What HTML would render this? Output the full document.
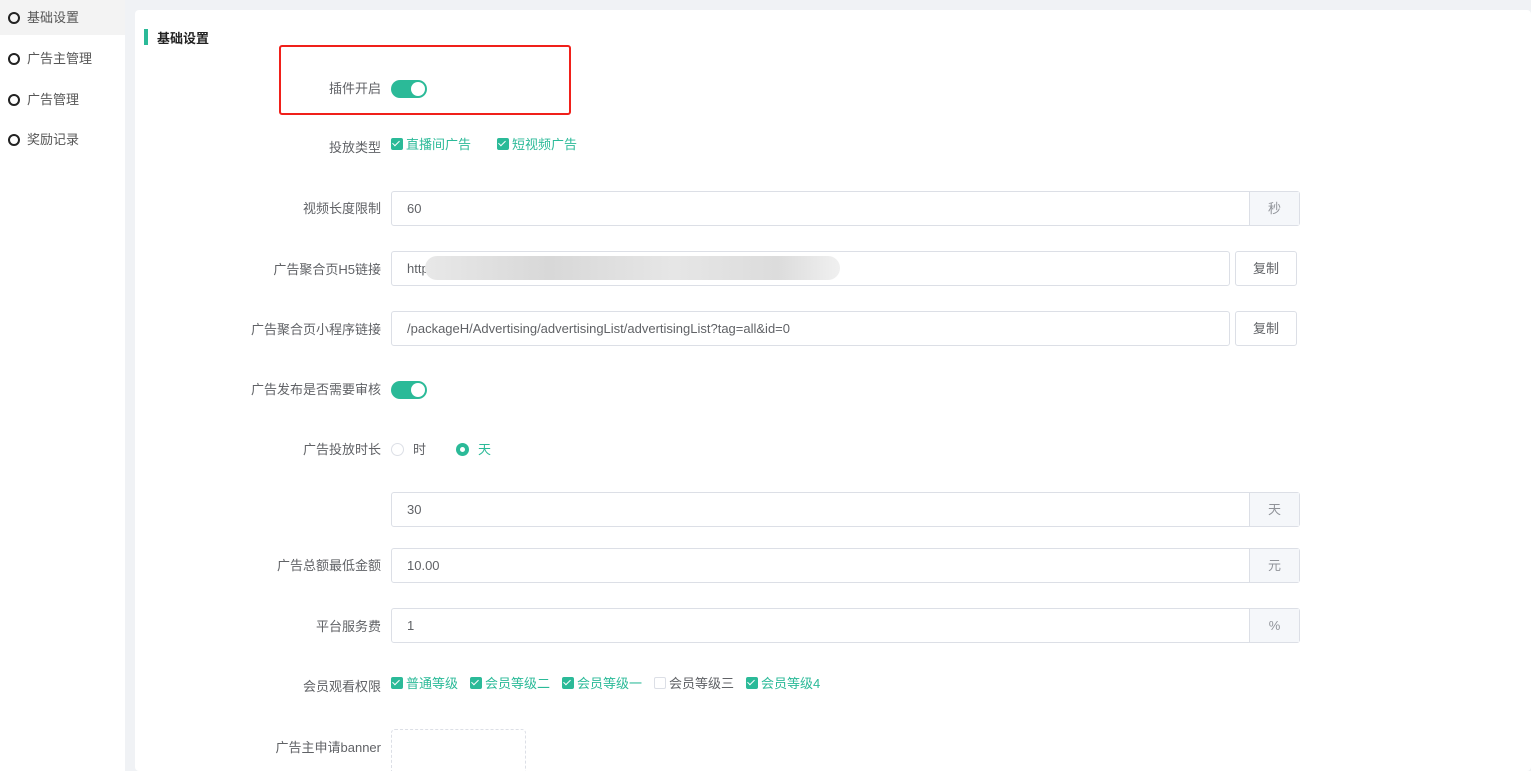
<!DOCTYPE html><html><head><meta charset="utf-8"><style>
*{box-sizing:border-box;margin:0;padding:0}
html,body{width:1531px;height:771px;overflow:hidden}
body{background:#f0f2f5;font-family:"Liberation Sans","Noto Sans CJK SC",sans-serif;font-size:13px;color:#606266;position:relative}
.a{position:absolute}
.side{left:0;top:0;width:125px;height:771px;background:#fff}
.si{left:0;width:125px;height:35px;line-height:35px;padding-left:27px;color:#555;font-size:13px}
.si:before{content:"";position:absolute;left:8px;top:12px;width:8px;height:8px;border:2px solid #222;border-radius:50%}
.card{left:135px;top:10px;width:1396px;height:761px;background:#fff;border-radius:4px}
.lbl{width:190px;left:191px;text-align:right;font-size:13px;color:#606266}
.inp{left:391px;width:909px;height:35px;border:1px solid #dcdfe6;border-radius:3px;line-height:33px;padding-left:15px;color:#606266}
.ap{position:absolute;right:0;top:0;width:50px;height:33px;background:#f5f7fa;border-left:1px solid #dcdfe6;text-align:center;color:#909399}
.btn{left:1235px;width:62px;height:35px;border:1px solid #dcdfe6;border-radius:3px;text-align:center;line-height:33px;color:#606266}
.sw{width:36px;height:18px;border-radius:9px;background:#2bba98}
.sw:after{content:"";position:absolute;right:2px;top:2px;width:14px;height:14px;border-radius:50%;background:#fff}
.cb{display:inline-block;width:12px;height:12px;border-radius:2px;background:#2bba98;vertical-align:-1px;margin-right:3px;position:relative}
.cb:after{content:"";position:absolute;left:3px;top:1px;width:3px;height:6px;border:solid #fff;border-width:0 1.5px 1.5px 0;transform:rotate(45deg)}
.cb.off{background:#fff;border:1px solid #dcdfe6}.cb.off:after{display:none}
.g{color:#2bba98}
</style></head><body>
<div class="a side"></div>
<div class="a si" style="top:0;background:#f3f3f3">基础设置</div>
<div class="a si" style="top:41px">广告主管理</div>
<div class="a si" style="top:82px">广告管理</div>
<div class="a si" style="top:122px">奖励记录</div>
<div class="a card"></div>
<div class="a" style="left:144px;top:29px;width:4px;height:16px;background:#2bba98"></div>
<div class="a" style="left:157px;top:28px;font-weight:bold;color:#222;font-size:13px">基础设置</div>
<div class="a" style="left:279px;top:45px;width:292px;height:70px;border:2px solid #f0201a;border-radius:3px"></div>
<div class="a lbl" style="top:78px">插件开启</div><div class="a sw" style="left:391px;top:80px"></div>
<div class="a lbl" style="top:137px">投放类型</div>
<div class="a g" style="left:391px;top:134px"><span class="cb"></span>直播间广告</div>
<div class="a g" style="left:497px;top:134px"><span class="cb"></span>短视频广告</div>
<div class="a lbl" style="top:198px">视频长度限制</div>
<div class="a inp" style="top:191px">60<div class="ap">秒</div></div>
<div class="a lbl" style="top:259px">广告聚合页H5链接</div>
<div class="a inp" style="top:251px;width:839px">http</div>
<div class="a" style="left:425px;top:256px;width:415px;height:24px;border-radius:12px;background:linear-gradient(90deg,#e8e8e8,#d8d8d8 30%,#e6e6e6 60%,#dcdcdc 85%,#f0f0f0)"></div>
<div class="a btn" style="top:251px">复制</div>
<div class="a lbl" style="top:319px">广告聚合页小程序链接</div>
<div class="a inp" style="top:311px;width:839px">/packageH/Advertising/advertisingList/advertisingList?tag=all&amp;id=0</div>
<div class="a btn" style="top:311px">复制</div>
<div class="a lbl" style="top:379px">广告发布是否需要审核</div><div class="a sw" style="left:391px;top:381px"></div>
<div class="a lbl" style="top:439px">广告投放时长</div>
<div class="a" style="left:391px;top:443px;width:13px;height:13px;border:1px solid #dcdfe6;border-radius:50%"></div>
<div class="a" style="left:413px;top:439px">时</div>
<div class="a" style="left:456px;top:443px;width:13px;height:13px;border-radius:50%;background:#2bba98"><div style="margin:4px;width:5px;height:5px;border-radius:50%;background:#fff"></div></div>
<div class="a g" style="left:478px;top:439px">天</div>
<div class="a inp" style="top:492px">30<div class="ap">天</div></div>
<div class="a lbl" style="top:555px">广告总额最低金额</div>
<div class="a inp" style="top:548px">10.00<div class="ap">元</div></div>
<div class="a lbl" style="top:616px">平台服务费</div>
<div class="a inp" style="top:608px">1<div class="ap">%</div></div>
<div class="a lbl" style="top:676px">会员观看权限</div>
<div class="a g" style="left:391px;top:673px"><span class="cb"></span>普通等级</div>
<div class="a g" style="left:470px;top:673px"><span class="cb"></span>会员等级二</div>
<div class="a g" style="left:562px;top:673px"><span class="cb"></span>会员等级一</div>
<div class="a" style="left:654px;top:673px"><span class="cb off"></span>会员等级三</div>
<div class="a g" style="left:746px;top:673px"><span class="cb"></span>会员等级4</div>
<div class="a lbl" style="top:737px">广告主申请banner</div>
<div class="a" style="left:391px;top:729px;width:135px;height:50px;border:1px dashed #dcdfe6;border-radius:4px"></div>
</body></html>
